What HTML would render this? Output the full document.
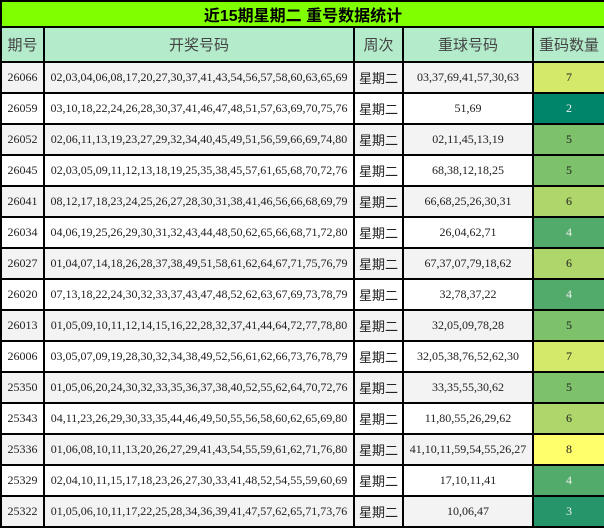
<!DOCTYPE html><html><head><meta charset="utf-8"><style>
body{margin:0;background:#fff;font-family:"Liberation Serif","Noto Serif CJK SC",serif;}
table{border-collapse:collapse;width:604px;table-layout:fixed;}
td,th{border:2px solid #000;text-align:center;padding:0;font-size:12px;color:#222;height:29px;white-space:nowrap;overflow:hidden;}
td:nth-child(3){font-family:"Liberation Sans","Noto Sans CJK SC",sans-serif;font-size:13px;}
.t{background:#80ff00;font-family:"Liberation Sans","Noto Sans CJK SC",sans-serif;font-weight:bold;font-size:16px;height:22px;color:#000;}
th{background:#b3ebcb;font-family:"Liberation Sans","Noto Sans CJK SC",sans-serif;font-size:15px;color:#444;height:33px;font-weight:normal;}
tr.g td{background:#f3f3f3}
.w{color:#eee!important}
</style></head><body><table>
<colgroup><col style="width:43px"><col style="width:310px"><col style="width:49px"><col style="width:130px"><col style="width:72px"></colgroup>
<tr><td colspan="5" class="t">近15期星期二 重号数据统计</td></tr>
<tr><th>期号</th><th>开奖号码</th><th>周次</th><th>重球号码</th><th>重码数量</th></tr>
<tr class="g"><td>26066</td><td>02,03,04,06,08,17,20,27,30,37,41,43,54,56,57,58,60,63,65,69</td><td>星期二</td><td>03,37,69,41,57,30,63</td><td style="background:#d4e86a!important">7</td></tr>
<tr><td>26059</td><td>03,10,18,22,24,26,28,30,37,41,46,47,48,51,57,63,69,70,75,76</td><td>星期二</td><td>51,69</td><td class="w" style="background:#00846a">2</td></tr>
<tr class="g"><td>26052</td><td>02,06,11,13,19,23,27,29,32,34,40,45,49,51,56,59,66,69,74,80</td><td>星期二</td><td>02,11,45,13,19</td><td style="background:#7dc26a!important">5</td></tr>
<tr><td>26045</td><td>02,03,05,09,11,12,13,18,19,25,35,38,45,57,61,65,68,70,72,76</td><td>星期二</td><td>68,38,12,18,25</td><td style="background:#7dc26a">5</td></tr>
<tr class="g"><td>26041</td><td>08,12,17,18,23,24,25,26,27,28,30,31,38,41,46,56,66,68,69,79</td><td>星期二</td><td>66,68,25,26,30,31</td><td style="background:#aed66a!important">6</td></tr>
<tr><td>26034</td><td>04,06,19,25,26,29,30,31,32,43,44,48,50,62,65,66,68,71,72,80</td><td>星期二</td><td>26,04,62,71</td><td class="w" style="background:#52ab6a">4</td></tr>
<tr class="g"><td>26027</td><td>01,04,07,14,18,26,28,37,38,49,51,58,61,62,64,67,71,75,76,79</td><td>星期二</td><td>67,37,07,79,18,62</td><td style="background:#aed66a!important">6</td></tr>
<tr><td>26020</td><td>07,13,18,22,24,30,32,33,37,43,47,48,52,62,63,67,69,73,78,79</td><td>星期二</td><td>32,78,37,22</td><td class="w" style="background:#52ab6a">4</td></tr>
<tr class="g"><td>26013</td><td>01,05,09,10,11,12,14,15,16,22,28,32,37,41,44,64,72,77,78,80</td><td>星期二</td><td>32,05,09,78,28</td><td style="background:#7dc26a!important">5</td></tr>
<tr><td>26006</td><td>03,05,07,09,19,28,30,32,34,38,49,52,56,61,62,66,73,76,78,79</td><td>星期二</td><td>32,05,38,76,52,62,30</td><td style="background:#d4e86a">7</td></tr>
<tr class="g"><td>25350</td><td>01,05,06,20,24,30,32,33,35,36,37,38,40,52,55,62,64,70,72,76</td><td>星期二</td><td>33,35,55,30,62</td><td style="background:#7dc26a!important">5</td></tr>
<tr><td>25343</td><td>04,11,23,26,29,30,33,35,44,46,49,50,55,56,58,60,62,65,69,80</td><td>星期二</td><td>11,80,55,26,29,62</td><td style="background:#aed66a">6</td></tr>
<tr class="g"><td>25336</td><td>01,06,08,10,11,13,20,26,27,29,41,43,54,55,59,61,62,71,76,80</td><td>星期二</td><td>41,10,11,59,54,55,26,27</td><td style="background:#ffff6b!important">8</td></tr>
<tr><td>25329</td><td>02,04,10,11,15,17,18,23,26,27,30,33,41,48,52,54,55,59,60,69</td><td>星期二</td><td>17,10,11,41</td><td class="w" style="background:#52ab6a">4</td></tr>
<tr class="g"><td>25322</td><td>01,05,06,10,11,17,22,25,28,34,36,39,41,47,57,62,65,71,73,76</td><td>星期二</td><td>10,06,47</td><td class="w" style="background:#27956a!important">3</td></tr>
</table></body></html>
